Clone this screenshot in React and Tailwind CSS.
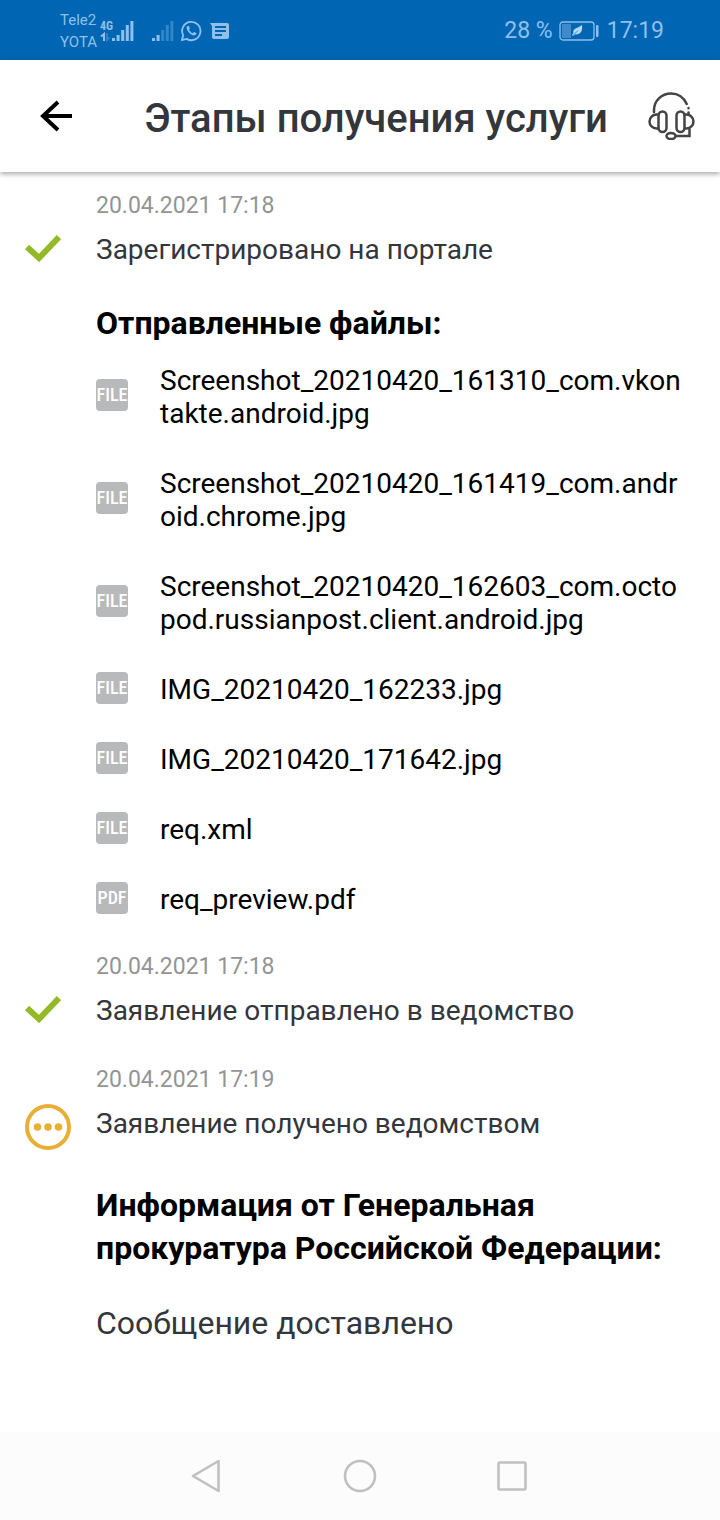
import clsx from "clsx";

const files = [
  { name: "Screenshot_20210420_161310_com.vkontakte.android.jpg", type: "FILE" },
  { name: "Screenshot_20210420_161419_com.android.chrome.jpg", type: "FILE" },
  { name: "Screenshot_20210420_162603_com.octopod.russianpost.client.android.jpg", type: "FILE" },
  { name: "IMG_20210420_162233.jpg", type: "FILE" },
  { name: "IMG_20210420_171642.jpg", type: "FILE" },
  { name: "req.xml", type: "FILE" },
  { name: "req_preview.pdf", type: "PDF" },
];

const Signal = ({ lit, className }) => (
  <svg viewBox="0 0 22 20" className={clsx("h-5 w-[22px]", className)} fill="#8fc0ec">
    {[3, 6, 11, 16, 20].map((h, i) => (
      <rect key={h} x={i * 4.6} y={20 - h} width="3" height={h} opacity={i < lit ? 1 : 0.35} />
    ))}
  </svg>
);

const StatusBar = () => (
  <div className="flex h-15 items-center justify-between bg-[#0066b3] pl-15 pr-14 pt-0.5 text-[#8fc0ec]">
    <div className="flex items-center">
      <div className="w-10 text-[15px] leading-[22px]">
        <div>Tele2</div>
        <div>YOTA</div>
      </div>
      <div className="w-3 font-['Roboto_Condensed','Liberation_Sans_Narrow','Roboto',sans-serif] text-xs font-bold leading-3">
        <div>4G</div>
        <svg viewBox="0 0 12 10" className="h-[10px] w-3" fill="none" strokeWidth="2">
          <path d="M4 9V2L1 4.500" stroke="#8fc0ec" />
          <path d="M7 1v7l2.500-2.500" stroke="#2f80c4" />
        </svg>
      </div>
      <Signal lit={5} />
      <Signal lit={2} className="ml-[18px]" />
      <svg viewBox="0 0 24 24" className="ml-1.5 h-[22px] w-[22px]" fill="none" stroke="#8fc0ec" strokeWidth="2">
        <path d="M2 22l1.500-5.300A10 10 0 1 1 7.200 20.600z" strokeLinejoin="round" />
        <path d="M8.300 6.500c-1.800 1.300-1.200 4 1.100 6.800 2.500 3 5.700 4.300 7.600 2.900 1-.8 1-1.700.8-1.900l-2.500-1.300-1.500 1.500c-1.800-.8-3.100-2.200-4-3.900l1-1.400-1.100-2.700z" fill="#8fc0ec" stroke="none" />
      </svg>
      <svg viewBox="0 0 19 16" className="ml-2 h-4 w-[19px]" fill="#8fc0ec">
        <path fillRule="evenodd" d="M0 0h17a2 2 0 0 1 2 2v12a2 2 0 0 1-2 2H4a2 2 0 0 1-2-2V3zM5 3v2h11V3zm0 4v2h11V7zm0 4v2h7v-2z" />
      </svg>
    </div>
    <div className="flex items-center text-[23px]">
      <span>28 %</span>
      <svg viewBox="0 0 40 20" className="ml-1.5 mr-2 h-5 w-10" fill="none">
        <rect x="1" y="1" width="34" height="18" rx="3" stroke="#8fc0ec" strokeWidth="1.300" />
        <path d="M3 3h9v14H3z" fill="#3f8bc9" />
        <path d="M23 4c.8 6-1.500 10-7 9.500l-2 1.500-1-1 1.500-2C13 7.500 19 7 23 4z" fill="#b4d8f5" />
        <path d="M14 14.500l5-5" stroke="#0066b3" strokeWidth=".7" />
        <rect x="37" y="4" width="2.500" height="12" rx="1" fill="#8fc0ec" />
      </svg>
      <span>17:19</span>
    </div>
  </div>
);

const Header = () => (
  <header className="flex h-28 items-center bg-white pl-10 pr-6 shadow-[0_2px_5px_rgba(0,0,0,0.35)]">
    <button type="button" aria-label="Назад" className="h-8 w-8">
      <svg viewBox="0 0 32 32" className="h-8 w-8" fill="none" stroke="#000" strokeWidth="4">
        <path d="M32 16H3M18 2L3 16l15 14" />
      </svg>
    </button>
    <h1 className="flex-1 pl-11 pt-1.5 text-center text-[40px] font-medium leading-[48px] text-[#33363b]">
      Этапы получения услуги
    </h1>
    <button type="button" aria-label="Поддержка" className="ml-3 h-12 w-12">
      <svg viewBox="0 0 48 48" className="h-12 w-12" fill="none" stroke="#444" strokeWidth="2.500" strokeLinecap="round">
        <path d="M6 20V18C6 9 13.500 1.500 23 1.500c7 0 13 4 15.700 10.500" />
        <path d="M40.500 16v.2M40.500 20.500v1" />
        <rect x="10.500" y="19.500" width="8" height="20.500" rx="4" />
        <rect x="28.500" y="19.500" width="8" height="20.500" rx="4" />
        <path d="M10.500 22.500H8.500a7 7 0 0 0 0 14h2M36.500 22.500h2a7 7 0 0 1 0 14h-2M41.500 37v7H28" />
        <ellipse cx="23" cy="44" rx="4.500" ry="3" />
      </svg>
    </button>
  </header>
);

const Check = () => (
  <svg viewBox="0 0 36 28" className="mb-1 h-7 w-9" fill="none" stroke="#93b927" strokeWidth="6">
    <path d="M2 13l12 11L34 3" />
  </svg>
);

const Pending = () => (
  <svg viewBox="0 0 46 46" className="mt-1.5 h-[46px] w-[46px] shrink-0" fill="#e9ae35">
    <circle cx="23" cy="23" r="21" fill="none" stroke="#e9ae35" strokeWidth="4" />
    <circle cx="12.500" cy="23" r="3.800" />
    <circle cx="23" cy="23" r="3.800" />
    <circle cx="33.500" cy="23" r="3.800" />
  </svg>
);

const Step = ({ date, title, icon, className, children }) => (
  <li className={className}>
    <time className="block pl-24 text-[23px] leading-7 text-[#949494]">{date}</time>
    <div className="mt-1.5 flex items-center">
      <div className="flex h-12 w-24 items-center pl-[25px]">{icon}</div>
      <p className="flex-1 text-[28px] leading-8 text-[#33363b]">{title}</p>
    </div>
    {children}
  </li>
);

const FileItem = ({ name, type }) => (
  <li className="flex items-center">
    <span className="-mt-0.5 mb-0.5 mr-8 flex h-8 w-8 shrink-0 items-center justify-center rounded-sm bg-[#b7b9bb] font-['Roboto_Condensed','Liberation_Sans_Narrow','Roboto',sans-serif] text-lg font-medium text-white">
      {type}
    </span>
    <a href="#" className="break-all text-[28px] leading-[33px] text-black">
      {name}
    </a>
  </li>
);

const NavBar = () => (
  <nav className="flex h-22 items-center justify-center gap-[104px] bg-[#fcfcfc]">
    <button type="button" aria-label="Назад">
      <svg viewBox="0 0 48 36" className="h-9 w-12" fill="none" stroke="#c0c0c0" strokeWidth="2.600" strokeLinejoin="round">
        <path d="M34.500 3v30L9 18z" />
      </svg>
    </button>
    <button type="button" aria-label="Домой">
      <svg viewBox="0 0 48 36" className="h-9 w-12" fill="none" stroke="#c0c0c0" strokeWidth="2.600">
        <circle cx="24" cy="18" r="15" />
      </svg>
    </button>
    <button type="button" aria-label="Недавние">
      <svg viewBox="0 0 48 36" className="h-9 w-12" fill="none" stroke="#c0c0c0" strokeWidth="2.600">
        <rect x="10.500" y="4.500" width="27" height="27" rx="1" />
      </svg>
    </button>
  </nav>
);

const App = () => {
  return (
    <div className="flex min-h-screen flex-col bg-white font-['Roboto',sans-serif]">
      <StatusBar />
      <Header />
      <main className="flex-1 pt-5">
        <ul>
          <Step date="20.04.2021 17:18" title="Зарегистрировано на портале" icon={<Check />}>
            <div className="pl-24 pr-8">
              <h2 className="mt-7 text-[32px] font-bold leading-[43px] text-black">Отправленные файлы:</h2>
              <ul className="mt-[19px] flex flex-col gap-[37px]">
                {files.map((file) => (
                  <FileItem key={file.name} {...file} />
                ))}
              </ul>
            </div>
          </Step>
          <Step
            className="mt-[37px]"
            date="20.04.2021 17:18"
            title="Заявление отправлено в ведомство"
            icon={<Check />}
          />
          <Step
            className="mt-[31px]"
            date="20.04.2021 17:19"
            title="Заявление получено ведомством"
            icon={<Pending />}
          >
            <div className="pl-24 pr-8">
              <h2 className="mt-9 text-[32px] font-bold leading-[43px] text-black">
                Информация от Генеральная прокуратура Российской Федерации:
              </h2>
              <p className="mt-8 text-[32px] leading-[43px] text-[#33363b]">Сообщение доставлено</p>
            </div>
          </Step>
        </ul>
      </main>
      <NavBar />
    </div>
  );
};

export default App;
